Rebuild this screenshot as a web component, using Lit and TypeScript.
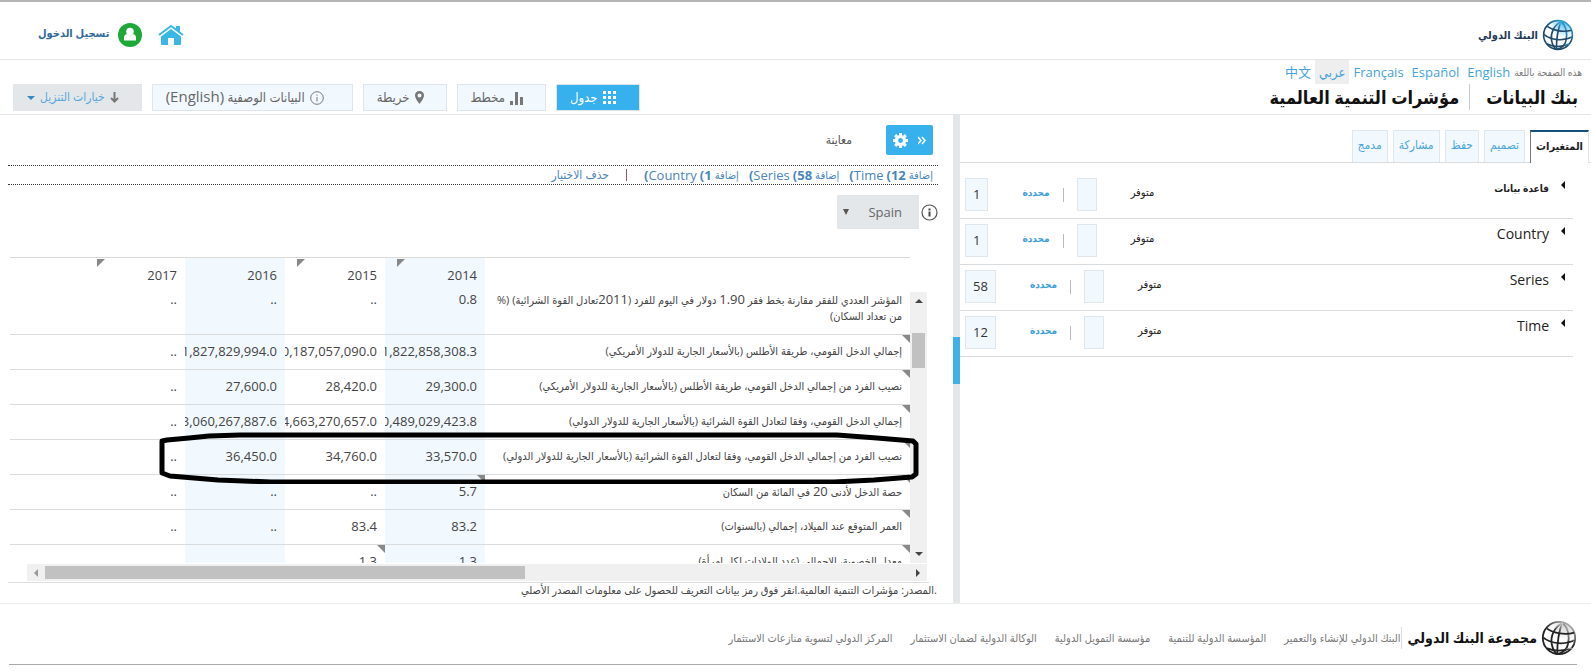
import { LitElement, html, css, svg } from "lit";
import { customElement, state } from "lit/decorators.js";
import { classMap } from "lit/directives/class-map.js";

interface Dimension {
  name: string;
  latin: boolean;
  selected: number;
}

interface Row {
  label: string;
  values: [string, string, string, string];
  labelNote?: boolean;
  noteAt?: number;
  first?: boolean;
}

const languages = [
  { label: "English", code: "en" },
  { label: "Español", code: "es" },
  { label: "Français", code: "fr" },
  { label: "عربي", code: "ar" },
  { label: "中文", code: "zh" },
];

const sideTabs = ["المتغيرات", "تصميم", "حفظ", "مشاركة", "مدمج"];

const dimensions: Dimension[] = [
  { name: "قاعدة بيانات", latin: false, selected: 1 },
  { name: "Country", latin: true, selected: 1 },
  { name: "Series", latin: true, selected: 58 },
  { name: "Time", latin: true, selected: 12 },
];

const additions = [
  { name: "Time", count: 12 },
  { name: "Series", count: 58 },
  { name: "Country", count: 1 },
];

const years = [
  { year: "2014", note: true },
  { year: "2015", note: true },
  { year: "2016", note: false },
  { year: "2017", note: true },
];

const rows: Row[] = [
  {
    label: "المؤشر العددي للفقر مقارنة بخط فقر 1.90 دولار في اليوم للفرد (2011تعادل القوة الشرائية) (% من تعداد السكان)",
    values: ["0.8", "..", "..", ".."],
    first: true,
  },
  {
    label: "إجمالي الدخل القومي، طريقة الأطلس (بالأسعار الجارية للدولار الأمريكي)",
    values: ["1,822,858,308.3", "0,187,057,090.0", "1,827,829,994.0", ".."],
    labelNote: true,
  },
  {
    label: "نصيب الفرد من إجمالي الدخل القومي، طريقة الأطلس (بالأسعار الجارية للدولار الأمريكي)",
    values: ["29,300.0", "28,420.0", "27,600.0", ".."],
    labelNote: true,
  },
  {
    label: "إجمالي الدخل القومي، وفقا لتعادل القوة الشرائية (بالأسعار الجارية للدولار الدولي)",
    values: ["0,489,029,423.8", "4,663,270,657.0", "3,060,267,887.6", ".."],
    labelNote: true,
  },
  {
    label: "نصيب الفرد من إجمالي الدخل القومي، وفقا لتعادل القوة الشرائية (بالأسعار الجارية للدولار الدولي)",
    values: ["33,570.0", "34,760.0", "36,450.0", ".."],
    labelNote: true,
  },
  {
    label: "حصة الدخل لأدنى 20 في المائة من السكان",
    values: ["5.7", "..", "..", ".."],
    labelNote: true,
    noteAt: 0,
  },
  {
    label: "العمر المتوقع عند الميلاد، إجمالي (بالسنوات)",
    values: ["83.2", "83.4", "..", ".."],
    labelNote: true,
  },
  {
    label: "معدل الخصوبة، الإجمالي (عدد الولادات لكل امرأة)",
    values: ["1.3", "1.3", "", ""],
    labelNote: true,
    noteAt: 1,
  },
];

const footerLinks = [
  "البنك الدولي للإنشاء والتعمير",
  "المؤسسة الدولية للتنمية",
  "مؤسسة التمويل الدولية",
  "الوكالة الدولية لضمان الاستثمار",
  "المركز الدولي لتسوية منازعات الاستثمار",
];

const globeLines = svg`
  <circle cx="20" cy="20" r="18"/>
  <path d="M24 3C15 8 10 18 12 27c1 5 3 9 6 11"/>
  <path d="M24 3c6 6 8 15 6 24-1 5-4 9-12 11"/>
  <path d="M24 3C20 12 18 26 18 38"/>
  <path d="M6 9c8 6 21 8 31 5"/>
  <path d="M2 19c9 8 25 9 36 3"/>
  <path d="M6 31c8 4 19 4 28 0"/>
`;

/* Digits inside Arabic labels are set in the larger Latin size. */
const withNumerals = (text: string) =>
  text
    .split(/([\d.]+)/)
    .map((part, i) => (i % 2 ? html`<span class="num">${part}</span>` : part));

@customElement("app-root")
export class AppRoot extends LitElement {
  @state() private activeTab = 0;

  static styles = css`
    :host {
      display: block;
      background: #fff;
      color: #333;
      font-family: "Open Sans", "DejaVu Sans Condensed", "DejaVu Sans", "Noto Sans CJK SC", sans-serif;
      font-size: 13px;
      line-height: 16px;
    }
    * { box-sizing: border-box; }
    a { color: inherit; text-decoration: none; }
    button, select {
      font: inherit;
      color: inherit;
      margin: 0;
      cursor: pointer;
    }
    .masthead {
      display: flex;
      align-items: center;
      justify-content: space-between;
      height: 60px;
      padding: 8px 17px 0 38px;
      border-top: 2px solid #b4b4b4;
      border-bottom: 1px solid #e3e5e7;
    }
    .brand {
      display: flex;
      align-items: center;
      gap: 4px;
      color: #1f3a57;
      font-size: 11px;
      font-weight: 700;
    }
    .account { display: flex; align-items: center; gap: 16px; }
    .account a { display: flex; align-items: center; gap: 9px; }
    .signin { color: #336a9a; font-size: 11px; font-weight: 700; padding-bottom: 3px; }

    .band {
      display: flex;
      justify-content: space-between;
      align-items: flex-end;
      height: 55px;
      padding: 0 9px 0 13px;
      border-bottom: 1px solid #e3e5e7;
    }
    .languages {
      display: flex;
      align-items: center;
      height: 24px;
      color: #45a3dc;
      font-size: 13px;
    }
    .languages .intro { color: #777; font-size: 10px; }
    .languages a { padding: 4px; }
    .languages a.current { background: #eee; }
    .titles { display: flex; align-items: center; height: 30px; padding: 0 4px 4px 0; }
    .titles h1, .titles h2 {
      margin: 0;
      color: #111;
      font-size: 18px;
      line-height: 26px;
      font-weight: 700;
    }
    .titles h2 { border-right: 1px solid #ccc; margin-right: 16px; padding-right: 10px; }

    .toolbar { display: flex; align-items: center; gap: 10px; padding-bottom: 3px; }
    .tool {
      display: flex;
      align-items: center;
      gap: 5px;
      height: 27px;
      padding: 0 22px 0 13px;
      border: 1px solid #dfe5ea;
      background: #f2f9fe;
      color: #666;
      font-size: 13px;
    }
    .tool span { padding-bottom: 2px; }
    .tool.on { background: #37b0ee; color: #fff; }
    .tool.meta { padding-right: 28px; }
    .tool .latin { font-size: 15px; }
    .tool.download { background: #e4e7e9; border-color: #e4e7e9; color: #5aa7dc; font-size: 12px; }

    .workspace {
      display: grid;
      grid-template-columns: minmax(0, 631fr) 7px minmax(0, 953fr);
      border-bottom: 1px solid #ebecec;
    }
    .splitter { background: #e4e7e9; padding-top: 222px; }
    .grip {
      display: block;
      width: 7px;
      height: 47px;
      padding: 0;
      border: 0;
      background: #3fb1e8;
    }

    .tabs {
      display: flex;
      gap: 5px;
      height: 48px;
      padding: 15px 2px 0 0;
      border-bottom: 1px solid #d9dbdc;
    }
    .tab {
      height: 32px;
      padding: 0 5px 4px;
      border: 1px solid #dfe7ec;
      border-bottom: 0;
      background: #f2f9fe;
      color: #4aa5dc;
      font-size: 12px;
    }
    .tab.active {
      height: 33px;
      background: #fff;
      color: #222;
      font-size: 11px;
      font-weight: 700;
      border-top: 2px solid #14527c;
      border-left: 1px solid #777;
    }
    .dimensions { margin: 0; padding: 10px 18px 0 0; list-style: none; }
    .dimension {
      display: flex;
      justify-content: space-between;
      height: 46px;
      padding: 5px 8px 0 5px;
      border-bottom: 1px solid #d9dbdc;
    }
    .name {
      display: flex;
      align-items: flex-start;
      gap: 12px;
      height: 20px;
      padding: 0;
      border: 0;
      background: none;
      color: #222;
      line-height: 20px;
    }
    .name .latin { font-size: 14px; }
    .name .arabic { font-size: 10px; font-weight: 700; }
    .name svg { margin-top: 3px; }
    .counts { display: flex; align-items: center; height: 33px; font-size: 10px; }
    .counts .available { padding: 0 0 6px 34px; color: #222; font-size: 11px; }
    .counts a { color: #3fa0dc; font-weight: 700; padding: 0 13px 6px 34px; }
    .box {
      display: block;
      height: 33px;
      min-width: 20px;
      padding: 0 7px;
      border: 1px solid #dfe7ec;
      background: #f2f9fe;
      color: #333;
      font-size: 13px;
      line-height: 31px;
    }
    .bar { height: 14px; margin-right: 13px; border-right: 1px solid #bbb; }

    .preview { padding: 10px 20px 0 8px; }
    .heading { display: flex; align-items: center; gap: 34px; height: 30px; color: #555; font-size: 12px; }
    .settings {
      display: flex;
      align-items: center;
      justify-content: center;
      gap: 10px;
      width: 47px;
      height: 30px;
      padding: 0;
      border: 0;
      border-radius: 2px;
      background: #37b0ee;
    }
    .additions {
      display: flex;
      align-items: center;
      gap: 10px;
      height: 20px;
      margin: 10px -5px 0 0;
      padding-right: 5px;
      border: dotted #333;
      border-width: 1px 0;
      color: #4a86bd;
    }
    .additions a { display: flex; gap: 3px; }
    .additions .ar { font-size: 11px; }
    .additions .clear { font-size: 12px; }
    .divider { width: 1px; height: 12px; margin: 0 7px; background: #96576b; }
    .country { display: flex; align-items: center; gap: 1px; height: 34px; margin: 10px -5px 0 0; }
    .icon-button { display: flex; padding: 0; border: 0; background: none; }
    .picker { position: relative; margin-right: 1px; }
    .picker select {
      width: 82px;
      height: 34px;
      padding: 0 17px 0 24px;
      border: 0;
      border-radius: 0;
      appearance: none;
      background: #e4e7e9;
      color: #666;
      font-size: 13px;
    }
    .picker svg { position: absolute; left: 6px; top: 14px; pointer-events: none; }

    .grid {
      position: relative;
      display: grid;
      grid-template-columns: 17px minmax(0, 1fr);
      margin: 28px 6px 0 2px;
    }
    .sheet { overflow: hidden; height: 306px; border-top: 1px solid #d9dad6; }
    table {
      width: 100%;
      table-layout: fixed;
      border-collapse: separate;
      border-spacing: 0;
      color: #444;
    }
    .col-label { width: 425px; }
    .col-year { width: 100px; }
    th, td {
      position: relative;
      height: 35px;
      padding: 0 8px 2px;
      border-bottom: 1px solid #d9dbdc;
      overflow: hidden;
      text-align: right;
      white-space: nowrap;
      font-weight: 400;
    }
    thead th { height: 33px; border-bottom: 0; padding: 0 8px; }
    .tint { background: #f2f9fe; }
    .label { font-size: 11px; }
    .num { font-size: 13px; }
    .first th, .first td { height: 44px; padding-bottom: 10px; vertical-align: top; }
    .first .label { white-space: normal; }
    .note::after {
      content: "";
      position: absolute;
      top: 0;
      right: 0;
      border-style: solid;
      border-width: 0 8px 8px 0;
      border-color: transparent #888 transparent transparent;
    }
    .year-note::after {
      content: "";
      position: absolute;
      top: 1px;
      left: 12px;
      border-style: solid;
      border-width: 8px 8px 0 0;
      border-color: #888 transparent transparent transparent;
    }
    .vbar {
      display: flex;
      flex-direction: column;
      align-items: center;
      margin-top: 35px;
      height: 271px;
      padding: 6px 0;
      background: #f0f0f0;
    }
    .vthumb { width: 13px; height: 35px; margin-top: 30px; margin-bottom: auto; background: #c1c1c1; }
    .hbar {
      grid-column: 1 / -1;
      display: flex;
      align-items: center;
      height: 17px;
      margin: 1px 0 0 17px;
      padding: 0 6px;
      background: #f0f0f0;
    }
    .hthumb { width: 54%; height: 13px; margin-right: auto; margin-left: 7px; background: #c1c1c1; }
    .marker { position: absolute; right: 7px; top: 175px; pointer-events: none; }
    .source {
      height: 21px;
      margin: 1px 4px 0 0;
      border-top: 1px solid #dcdcda;
      color: #444;
      font-size: 11px;
      line-height: 14px;
    }
    .source p { margin: 0 -8px 0 0; }

    .footer {
      display: flex;
      align-items: center;
      height: 61px;
      margin: 0 14px 0 9px;
      padding-top: 8px;
      border-bottom: 1px solid #aaa;
      color: #777;
    }
    .group {
      display: flex;
      align-items: center;
      gap: 4px;
      color: #111;
      font-size: 14px;
      font-weight: 700;
      white-space: nowrap;
    }
    .links {
      display: flex;
      gap: 18px;
      margin-right: 6px;
      border-right: 1px solid #ddd;
      font-size: 11px;
      line-height: 22px;
      white-space: nowrap;
    }
  `;

  private globe(id: string, size: number, dark: string, light: string) {
    return html`<svg width=${size} height=${size} viewBox="0 0 40 40" fill="none" stroke="url(#${id})" stroke-width="2" aria-hidden="true">
      <defs>
        <linearGradient id=${id} x1="0.2" y1="1" x2="0.9" y2="0">
          <stop offset="0.5" stop-color=${dark}></stop>
          <stop offset="1" stop-color=${light}></stop>
        </linearGradient>
        <radialGradient id="${id}-glow" cx="0.7" cy="0.1" r="0.5">
          <stop offset="0" stop-color=${light} stop-opacity="0.8"></stop>
          <stop offset="1" stop-color=${light} stop-opacity="0"></stop>
        </radialGradient>
      </defs>
      <circle cx="20" cy="20" r="18" stroke="none" fill="url(#${id}-glow)"></circle>
      ${globeLines}
    </svg>`;
  }

  private renderMasthead() {
    return html`<header class="masthead">
      <a class="brand" href="#">${this.globe("blue-globe", 32, "#1f4a6b", "#35b4ea")}<span>البنك الدولي</span></a>
      <div class="account">
        <a href="#" aria-label="الصفحة الرئيسية">
          <svg width="26" height="22" viewBox="0 0 26 22" aria-hidden="true">
            <path d="M1 11 13 2l12 9" fill="none" stroke="#39b8e6" stroke-width="2"/>
            <path d="M18 2h4v6l-4-3z" fill="#39b8e6"/>
            <path d="M3 12.500 13 5l10 7.500V20q0 1-1 1h-6v-7h-6v7H4q-1 0-1-1z" fill="#39b8e6"/>
          </svg>
        </a>
        <a href="#">
          <svg width="24" height="24" viewBox="0 0 24 24" aria-hidden="true">
            <circle cx="12" cy="12" r="12" fill="#1da838"/>
            <circle cx="12" cy="8.500" r="3.800" fill="#fff"/>
            <path d="M6 17.500v-3q0-3 3-3.500 3 2.500 6 0 3 .5 3 3.500v3z" fill="#fff"/>
          </svg>
          <span class="signin">تسجيل الدخول</span>
        </a>
      </div>
    </header>`;
  }

  private renderBand() {
    return html`<div class="band">
      <div>
        <nav class="languages">
          <span class="intro">هذه الصفحة باللغة</span>
          ${languages.map(
            (l) => html`<a href="#" lang=${l.code} class=${classMap({ current: l.code === "ar" })}>${l.label}</a>`
          )}
        </nav>
        <div class="titles"><h1>بنك البيانات</h1><h2>مؤشرات التنمية العالمية</h2></div>
      </div>
      <div class="toolbar">
        <button class="tool on">
          <svg width="14" height="14" viewBox="0 0 14 14" fill="#fff" aria-hidden="true">
            ${[0, 5, 10].map((y) => [0, 5, 10].map((x) => svg`<rect x=${x} y=${y} width="3" height="3"/>`))}
          </svg>
          <span>جدول</span>
        </button>
        <button class="tool">
          <svg width="13" height="14" viewBox="0 0 13 14" fill="#777" aria-hidden="true">
            <path d="M0 10h3v4H0zM5 1h3v13H5zM10 6h3v8h-3z"/>
          </svg>
          <span>مخطط</span>
        </button>
        <button class="tool">
          <svg width="9" height="13" viewBox="0 0 9 13" aria-hidden="true">
            <path fill="#777" fill-rule="evenodd" d="M4.500 0A4.400 4.400 0 0 0 0 4.500C0 7.500 4.500 13 4.500 13S9 7.500 9 4.500A4.400 4.400 0 0 0 4.500 0zm0 2.500a2 2 0 1 1 0 4 2 2 0 0 1 0-4z"/>
          </svg>
          <span>خريطة</span>
        </button>
        <button class="tool meta">
          <svg width="14" height="14" viewBox="0 0 14 14" fill="none" stroke="#777" aria-hidden="true">
            <circle cx="7" cy="7" r="6.300"/><path d="M7 6v4.500M7 3.500v1.200"/>
          </svg>
          <span>البيانات الوصفية <span class="latin">(English)</span></span>
        </button>
        <button class="tool download">
          <svg width="9" height="11" viewBox="0 0 9 11" fill="none" stroke="#777" stroke-width="2" aria-hidden="true">
            <path d="M4.500 0v9.500M1 6l3.500 3.500L8 6"/>
          </svg>
          <span>خيارات التنزيل</span>
          <svg width="8" height="4" viewBox="0 0 8 4" aria-hidden="true"><path d="M0 0h8L4 4z" fill="#3a88bf"/></svg>
        </button>
      </div>
    </div>`;
  }

  private renderSidebar() {
    return html`<aside>
      <div class="tabs" role="tablist">
        ${sideTabs.map(
          (t, i) => html`<button
            role="tab"
            class=${classMap({ tab: true, active: i === this.activeTab })}
            aria-selected=${i === this.activeTab}
            @click=${() => (this.activeTab = i)}
          >${t}</button>`
        )}
      </div>
      <ul class="dimensions">
        ${dimensions.map(
          (d) => html`<li class="dimension">
            <button class="name">
              <svg width="4" height="8" viewBox="0 0 4 8" aria-hidden="true"><path d="M4 0v8L0 4z" fill="#111"/></svg>
              <span class=${d.latin ? "latin" : "arabic"}>${d.name}</span>
            </button>
            <div class="counts">
              <span class="available">متوفر</span>
              <span class="box"></span>
              <span class="bar"></span>
              <a href="#">محددة</a>
              <span class="box">${d.selected}</span>
            </div>
          </li>`
        )}
      </ul>
    </aside>`;
  }

  private renderTable() {
    return html`<div class="grid">
      <div class="vbar" aria-hidden="true">
        <svg width="8" height="5" viewBox="0 0 8 5"><path d="M0 5h8L4 1z" fill="#444"/></svg>
        <div class="vthumb"></div>
        <svg width="8" height="5" viewBox="0 0 8 5"><path d="M0 0h8L4 4z" fill="#444"/></svg>
      </div>
      <div class="sheet">
        <table>
          <colgroup>
            <col class="col-label" />
            ${years.map(() => html`<col class="col-year" />`)}
            <col />
          </colgroup>
          <thead>
            <tr>
              <th></th>
              ${years.map(
                (y, i) => html`<th scope="col" class=${classMap({ tint: i % 2 === 0, "year-note": y.note })}>${y.year}</th>`
              )}
              <th></th>
            </tr>
          </thead>
          <tbody>
            ${rows.map(
              (r) => html`<tr class=${classMap({ first: !!r.first })}>
                <th scope="row" class=${classMap({ label: true, note: !!r.labelNote })}>${withNumerals(r.label)}</th>
                ${r.values.map(
                  (v, i) => html`<td class=${classMap({ tint: i % 2 === 0, note: r.noteAt === i })}>${v}</td>`
                )}
                <td></td>
              </tr>`
            )}
          </tbody>
        </table>
      </div>
      <div class="hbar" aria-hidden="true">
        <svg width="5" height="8" viewBox="0 0 5 8"><path d="M0 0v8l4-4z" fill="#444"/></svg>
        <div class="hthumb"></div>
        <svg width="5" height="8" viewBox="0 0 5 8"><path d="M5 0v8L1 4z" fill="#999"/></svg>
      </div>
      <svg class="marker" width="762" height="52" viewBox="0 0 762 52" fill="none" stroke="#000" stroke-width="5" stroke-linejoin="round" aria-hidden="true">
        <path d="M4 9 9 8 31 6l20-2 31-1h597l40 3 36 3 3 3v30l-4 3-38 3-40 2H113l-53-2-48-4-8-3z"/>
      </svg>
    </div>`;
  }

  private renderPreview() {
    return html`<main class="preview">
      <div class="heading">
        <button class="settings" aria-label="الإعدادات">
          <svg width="8" height="9" viewBox="0 0 8 9" fill="none" stroke="#fff" stroke-width="1.500" aria-hidden="true">
            <path d="m0 1 3 3.500L0 8M4 1l3 3.500L4 8"/>
          </svg>
          <svg width="15" height="15" viewBox="0 0 16 16" aria-hidden="true">
            <circle cx="8" cy="8" r="4.300" fill="none" stroke="#fff" stroke-width="3.400"/>
            <path d="M8 0v3M8 13v3M0 8h3M13 8h3M2.300 2.300l2 2M11.700 11.700l2 2M2.300 13.700l2-2M11.700 4.300l2-2" stroke="#fff" stroke-width="3.200"/>
          </svg>
        </button>
        <span>معاينة</span>
      </div>
      <div class="additions">
        ${additions.map(
          (a) => html`<a href="#">
            <span class="ar">إضافة</span>
            <b dir="ltr">(${a.count}</b>
            <span dir="ltr"><b>(</b>${a.name}</span>
          </a>`
        )}
        <span class="divider"></span>
        <a href="#" class="clear">حذف الاختيار</a>
      </div>
      <div class="country">
        <button class="icon-button" aria-label="معلومات">
          <svg width="17" height="17" viewBox="0 0 17 17" aria-hidden="true">
            <circle cx="8.500" cy="8.500" r="7.500" fill="#fff" stroke="#555" stroke-width="1.200"/>
            <path d="M7.500 4.500h2v2h-2zM7.500 7.500h2v5h-2z" fill="#444"/>
          </svg>
        </button>
        <div class="picker">
          <select aria-label="البلد"><option>Spain</option></select>
          <svg width="6" height="6" viewBox="0 0 6 6" aria-hidden="true"><path d="M0 0h6L3 6z" fill="#555"/></svg>
        </div>
      </div>
      ${this.renderTable()}
      <div class="source"><p>.المصدر: مؤشرات التنمية العالمية.انقر فوق رمز بيانات التعريف للحصول على معلومات المصدر الأصلي</p></div>
    </main>`;
  }

  render() {
    return html`<div dir="rtl" lang="ar">
      ${this.renderMasthead()} ${this.renderBand()}
      <div class="workspace">
        ${this.renderSidebar()}
        <div class="splitter"><button class="grip" aria-label="طي اللوحة"></button></div>
        ${this.renderPreview()}
      </div>
      <footer class="footer">
        <a class="group" href="#">${this.globe("grey-globe", 36, "#222", "#ccc")}<span>مجموعة البنك الدولي</span></a>
        <nav class="links">${footerLinks.map((l) => html`<a href="#">${l}</a>`)}</nav>
      </footer>
    </div>`;
  }
}
